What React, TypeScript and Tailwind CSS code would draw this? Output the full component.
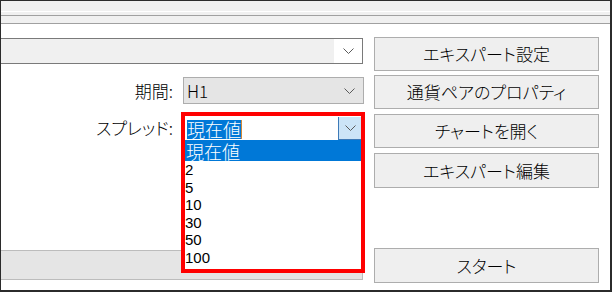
import React from "react";

const Chevron = () => (
  <svg width="11" height="6" viewBox="0 0 11 6" fill="none">
    <polyline points="0.5,0.5 5.5,5.5 10.5,0.5" stroke="#5a5a5a" strokeWidth="1" />
  </svg>
);

const Btn = ({ label, className }: { label: string; className: string }) => (
  <div
    className={
      "flex w-[225px] items-center justify-center border border-[#adadad] bg-[#efefef] text-[17px] text-black " +
      className
    }
  >
    {label}
  </div>
);

const spreads = ["2", "5", "10", "30", "50", "100"];

const App = () => {
  return (
    <div className="flex h-[292px] w-[612px] flex-col border-t border-r-2 border-b-2 border-l border-[#2b2b2b] bg-white font-['Noto_Sans_CJK_JP',sans-serif] font-light [font-feature-settings:'palt']">
      {/* tab strip remains */}
      <div className="h-[10px] bg-[#f0f0f0]"></div>
      <div className="h-px bg-white"></div>
      <div className="h-[3px] bg-[#f0f0f0]"></div>
      <div className="h-px bg-[#a0a0a0]"></div>
      <div className="h-[7px] bg-[#f0f0f0]"></div>
      <div className="h-px bg-[#a0a0a0]"></div>

      <div className="flex flex-1">
        {/* left column */}
        <div className="flex w-[363px] flex-col">
          <div className="mt-[14px] flex h-[26px] w-[362px] border-y border-r border-[#7a7a7a]">
            <div className="flex-1 bg-[#f0f0f0]"></div>
            <div className="flex w-[28px] items-center justify-center bg-white">
              <Chevron />
            </div>
          </div>

          <div className="mt-[13px] flex h-[27px] items-center">
            <div className="w-[182px] pr-[10px] text-right text-[17px] leading-none text-black">
              期間:
            </div>
            <div className="flex h-full w-[181px] items-center border border-[#adadad] bg-[#e5e5e5]">
              <span className="flex-1 pl-[3px] text-[17px] text-black">H1</span>
              <div className="flex w-[28px] justify-center">
                <Chevron />
              </div>
            </div>
          </div>

          <div className="mt-[10px] flex h-[27px] items-center">
            <div className="w-[182px] pr-[10px] text-right text-[17px] leading-none text-black">
              スプレッド:
            </div>
            <div className="relative flex h-full w-[181px] items-start border border-[#0078d7] bg-white">
              <div className="flex-1 pt-[3px] pl-[3px]">
                <span className="inline-block h-[19px] border-r border-[#d0893a] bg-[#0078d7] text-[18px] leading-[19px] text-white">
                  現在値
                </span>
              </div>
              <div className="mt-[2px] mr-[2px] flex h-[23px] w-[23px] items-center justify-center border-b border-l border-[#3d7ab8] bg-[#cce4f7]">
                <Chevron />
              </div>

              {/* open dropdown list */}
              <div className="absolute top-[26px] left-[1px] z-10 flex h-[128px] w-[176px] flex-col bg-white">
                <div className="h-[20px] bg-[#0078d7] pl-px text-[18px] leading-[20px] text-white">
                  現在値
                </div>
                {spreads.map((s) => (
                  <div
                    key={s}
                    className="h-[17.5px] font-['Liberation_Sans',sans-serif] text-[15px] leading-[17.5px] font-normal text-black"
                  >
                    {s}
                  </div>
                ))}
              </div>

              {/* red callout */}
              <div className="pointer-events-none absolute top-[-3px] left-[-3px] z-20 h-[161px] w-[184px] border-4 border-[#ff0000]"></div>
            </div>
          </div>

          <div className="mt-[109px] h-[30px] w-[362px] border-y border-r border-[#bcbcbc] bg-[#e5e5e5]"></div>
        </div>

        {/* right column */}
        <div className="ml-[10px] flex flex-col">
          <Btn label="エキスパート設定" className="mt-[13px] h-[34px]" />
          <Btn label="通貨ペアのプロパティ" className="mt-[4px] h-[34px]" />
          <Btn label="チャートを開く" className="mt-[5px] h-[34px]" />
          <Btn label="エキスパート編集" className="mt-[5px] h-[35px]" />
          <Btn label="スタート" className="mt-[60px] h-[35px]" />
        </div>
      </div>
    </div>
  );
};

export default App;
